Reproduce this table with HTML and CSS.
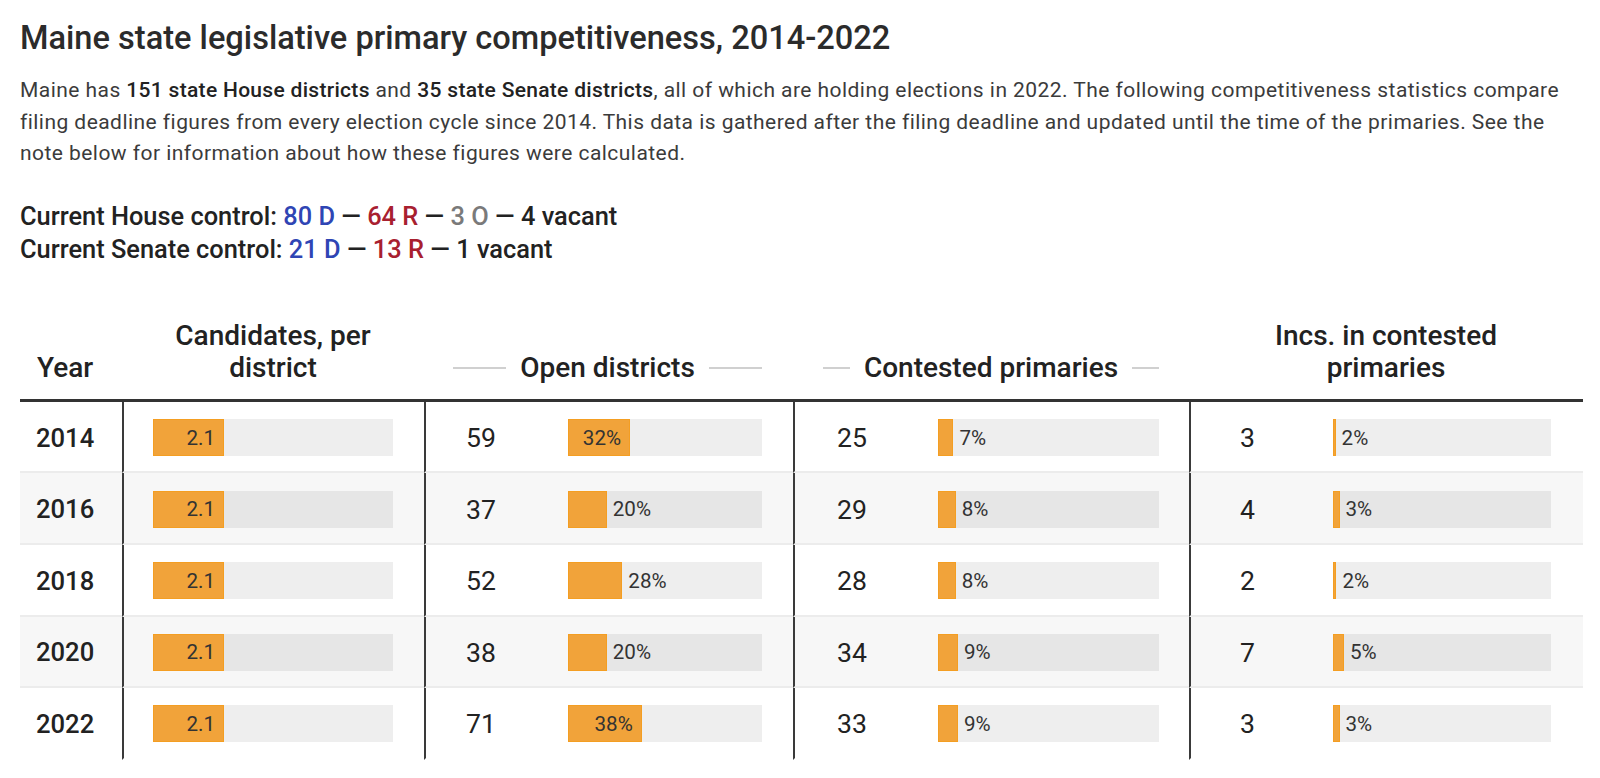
FILE: index.html
```html
<!DOCTYPE html>
<html lang="en">
<head>
<meta charset="utf-8">
<title>Maine state legislative primary competitiveness, 2014-2022</title>
<link rel="stylesheet" href="styles.css">
</head>
<body>
<div class="page">
  <h1 class="title">Maine state legislative primary competitiveness, 2014-2022</h1>
  <p class="intro">Maine has <strong>151 state House districts</strong> and <strong>35 state Senate districts</strong>, all of which are holding elections in 2022. The following competitiveness statistics compare filing deadline figures from every election cycle since 2014. This data is gathered after the filing deadline and updated until the time of the primaries. See the note below for information about how these figures were calculated.</p>
  <div class="control">
    <div>Current House control: <span class="dem">80 D</span> — <span class="rep">64 R</span> — <span class="oth">3 O</span> — 4 vacant</div>
    <div>Current Senate control: <span class="dem">21 D</span> — <span class="rep">13 R</span> — 1 vacant</div>
  </div>

  <div class="table">
    <div class="thead">
      <div class="th th-year">Year</div>
      <div class="th th-c1">Candidates, per<br>district</div>
      <div class="th th-c2"><span class="rule"></span><span>Open districts</span><span class="rule"></span></div>
      <div class="th th-c3"><span class="rule"></span><span>Contested primaries</span><span class="rule"></span></div>
      <div class="th th-c4">Incs. in contested<br>primaries</div>
    </div>

    <div class="row">
      <div class="cell year">2014</div>
      <div class="cell c1"><div class="bar"><div class="fill in" style="width:29.6%"><span>2.1</span></div></div></div>
      <div class="cell c2"><span class="num">59</span><div class="bar"><div class="fill in" style="width:32%"><span>32%</span></div></div></div>
      <div class="cell c3"><span class="num">25</span><div class="bar"><div class="fill" style="width:7%"></div><span class="lbl">7%</span></div></div>
      <div class="cell c4"><span class="num">3</span><div class="bar"><div class="fill" style="width:1.2%"></div><span class="lbl">2%</span></div></div>
    </div>

    <div class="row alt">
      <div class="cell year">2016</div>
      <div class="cell c1"><div class="bar"><div class="fill in" style="width:29.6%"><span>2.1</span></div></div></div>
      <div class="cell c2"><span class="num">37</span><div class="bar"><div class="fill" style="width:20%"></div><span class="lbl">20%</span></div></div>
      <div class="cell c3"><span class="num">29</span><div class="bar"><div class="fill" style="width:8%"></div><span class="lbl">8%</span></div></div>
      <div class="cell c4"><span class="num">4</span><div class="bar"><div class="fill" style="width:3%"></div><span class="lbl">3%</span></div></div>
    </div>

    <div class="row">
      <div class="cell year">2018</div>
      <div class="cell c1"><div class="bar"><div class="fill in" style="width:29.6%"><span>2.1</span></div></div></div>
      <div class="cell c2"><span class="num">52</span><div class="bar"><div class="fill" style="width:28%"></div><span class="lbl">28%</span></div></div>
      <div class="cell c3"><span class="num">28</span><div class="bar"><div class="fill" style="width:8%"></div><span class="lbl">8%</span></div></div>
      <div class="cell c4"><span class="num">2</span><div class="bar"><div class="fill" style="width:1.6%"></div><span class="lbl">2%</span></div></div>
    </div>

    <div class="row alt">
      <div class="cell year">2020</div>
      <div class="cell c1"><div class="bar"><div class="fill in" style="width:29.6%"><span>2.1</span></div></div></div>
      <div class="cell c2"><span class="num">38</span><div class="bar"><div class="fill" style="width:20%"></div><span class="lbl">20%</span></div></div>
      <div class="cell c3"><span class="num">34</span><div class="bar"><div class="fill" style="width:9%"></div><span class="lbl">9%</span></div></div>
      <div class="cell c4"><span class="num">7</span><div class="bar"><div class="fill" style="width:5%"></div><span class="lbl">5%</span></div></div>
    </div>

    <div class="row last">
      <div class="cell year">2022</div>
      <div class="cell c1"><div class="bar"><div class="fill in" style="width:29.6%"><span>2.1</span></div></div></div>
      <div class="cell c2"><span class="num">71</span><div class="bar"><div class="fill in" style="width:38%"><span>38%</span></div></div></div>
      <div class="cell c3"><span class="num">33</span><div class="bar"><div class="fill" style="width:9%"></div><span class="lbl">9%</span></div></div>
      <div class="cell c4"><span class="num">3</span><div class="bar"><div class="fill" style="width:3%"></div><span class="lbl">3%</span></div></div>
    </div>
  </div>
</div>
</body>
</html>
```

FILE: styles.css
```css
* { box-sizing: border-box; }

html, body {
  margin: 0;
  padding: 0;
  background: #ffffff;
}

body {
  font-family: Roboto, "Liberation Sans", Arial, sans-serif;
  color: #333333;
}

.page {
  padding: 18px 17px 0 20px;
}

.title {
  margin: 0;
  font-size: 32.6px;
  line-height: 40px;
  font-weight: 500;
  color: #2b2b2b;
}

.intro {
  margin: 17px 0 0 0;
  font-size: 21px;
  letter-spacing: 0.45px;
  line-height: 31.6px;
  font-weight: 400;
  color: #3b3b3b;
  max-width: 1549px;
}

.intro strong {
  font-weight: 500;
  color: #222222;
  letter-spacing: 0.3px;
}

.control {
  margin-top: 30px;
  font-size: 25.4px;
  line-height: 33px;
  font-weight: 500;
  color: #222222;
}

.dem { color: #2f45b4; }
.rep { color: #a8202f; }
.oth { color: #7a7a7a; }

/* table */
.table {
  margin-top: 54px;
  width: 1563px;
}

.thead,
.row {
  display: grid;
  grid-template-columns: 102px 302px 369px 396px 394px;
}

.thead {
  border-bottom: 3px solid #333333;
  align-items: end;
}

.th {
  font-size: 28px;
  line-height: 32px;
  font-weight: 500;
  color: #222222;
  padding-bottom: 15px;
}

.th-year { padding-left: 17px; }

.th-c1,
.th-c4 { text-align: center; }

.th-c2,
.th-c3 {
  display: flex;
  align-items: center;
  gap: 14px;
}

.th-c2 { padding-left: 29px; padding-right: 31px; }
.th-c3 { padding-left: 30px; padding-right: 30px; }

.rule {
  flex: 1;
  height: 2px;
  background: #d0d0d0;
}

.row {
  height: 71.6px;
}

.row.alt { background: #f7f7f7; }

.cell {
  display: flex;
  align-items: center;
  border-bottom: 2px solid #ececec;
  padding-top: 2px;
}

.row.last .cell { border-bottom-color: transparent; }

.cell.year {
  padding-left: 16px;
  font-size: 25.6px;
  font-weight: 500;
  color: #222222;
}

.c1, .c2, .c3, .c4 {
  border-left: 2px solid #3a3a3a;
}

.c1 { padding-left: 29px; }
.c2 { padding-left: 40px; }
.c3 { padding-left: 42px; }
.c4 { padding-left: 49px; }

.num {
  font-size: 26.6px;
  font-weight: 400;
  color: #222222;
}

.c2 .num { width: 102px; }
.c3 .num { width: 101px; }
.c4 .num { width: 93px; }

.bar {
  display: flex;
  align-items: stretch;
  height: 37px;
  background: rgba(0, 0, 0, 0.066);
}

.c1 .bar { width: 240px; }
.c2 .bar { width: 194px; }
.c3 .bar { width: 221px; }
.c4 .bar { width: 218px; }

.fill {
  background: #f1a33a;
  border: 1px solid #f49e22;
  min-width: 2px;
  flex: none;
}

.fill.in {
  display: flex;
  align-items: center;
  justify-content: flex-end;
  padding-right: 8px;
}

.fill span,
.lbl {
  font-size: 20.6px;
  color: #333333;
  white-space: nowrap;
}

.lbl {
  display: flex;
  align-items: center;
  margin-left: 6px;
}
```
